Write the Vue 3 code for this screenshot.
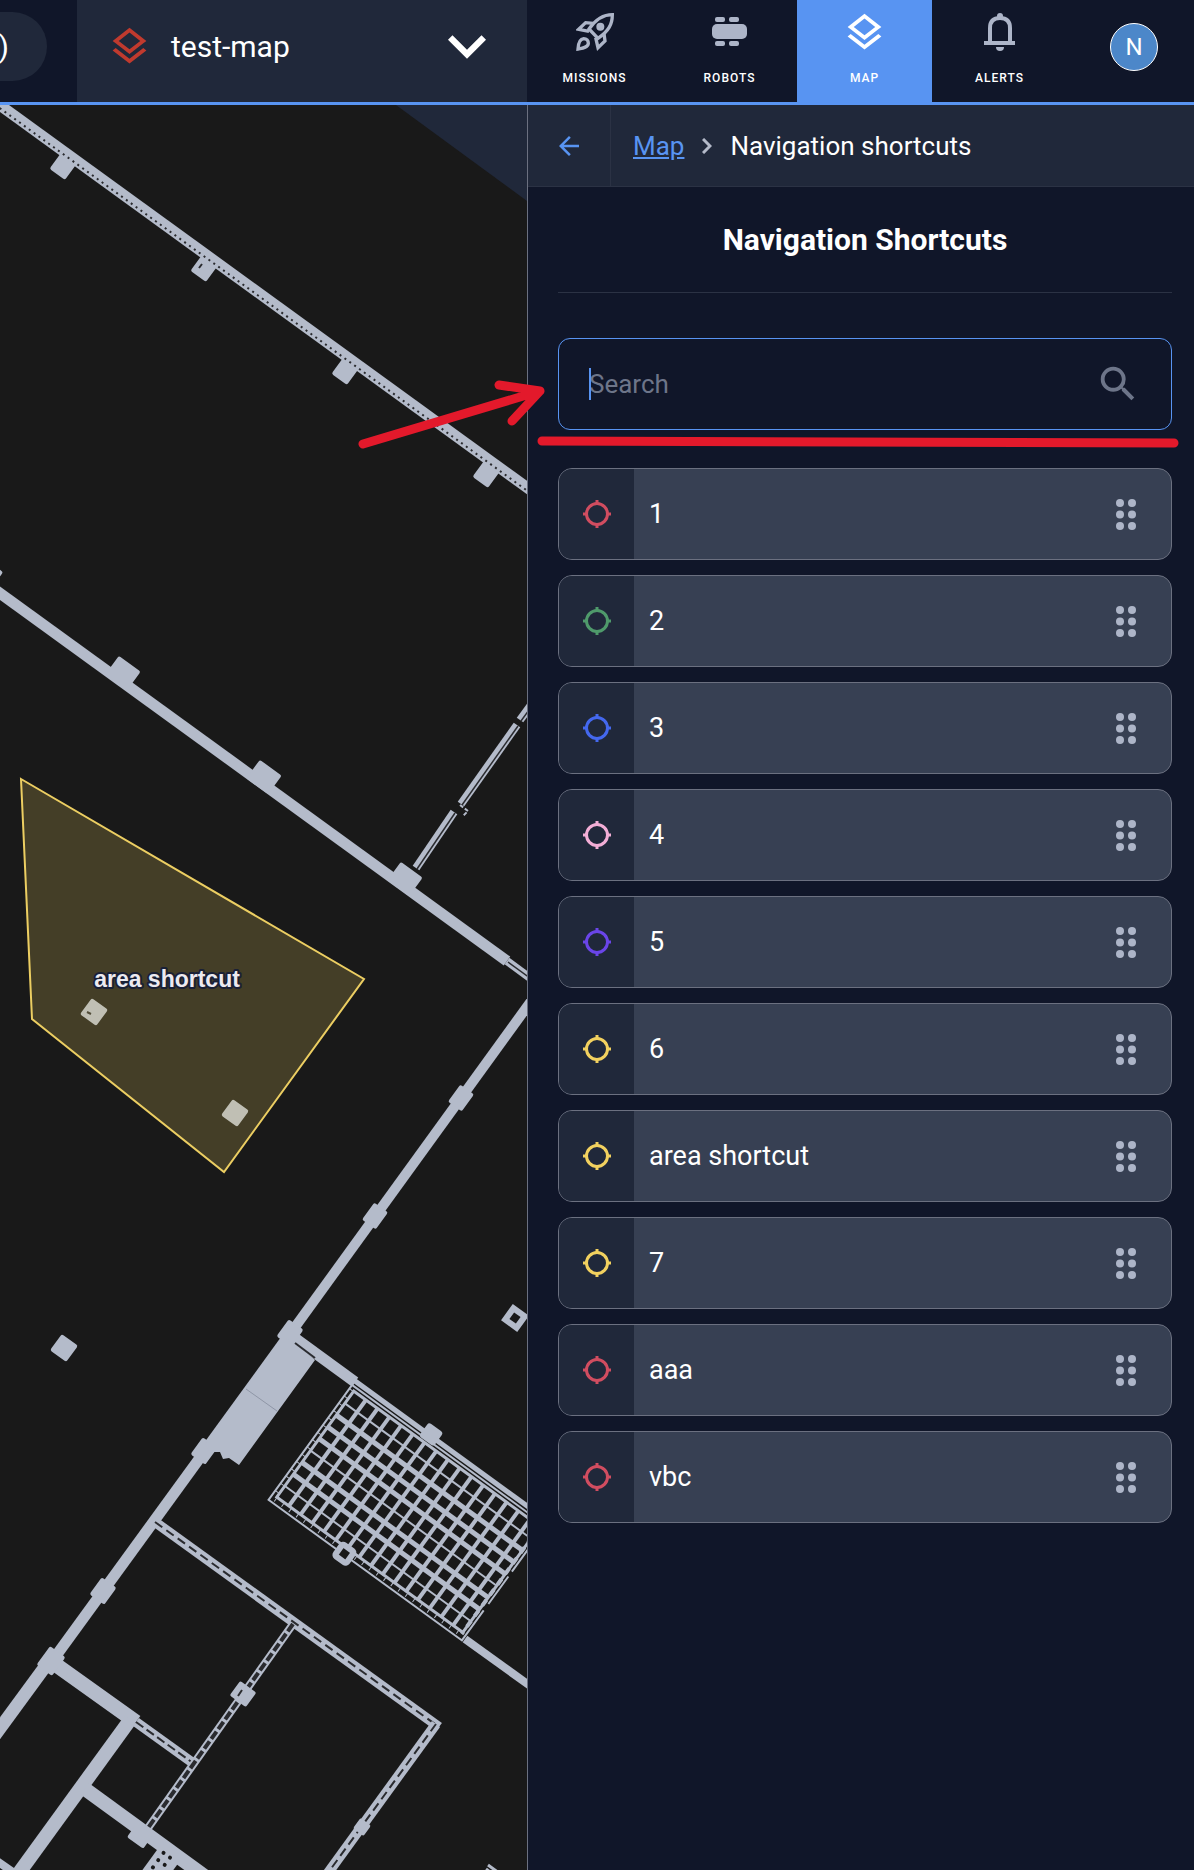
<script setup>
import { ref } from 'vue'

const search = ref('')

const tabs = [
  { key: 'missions', label: 'Missions' },
  { key: 'robots', label: 'Robots' },
  { key: 'map', label: 'Map' },
  { key: 'alerts', label: 'Alerts' },
]
const activeTab = ref('map')

const shortcuts = [
  { name: '1', color: '#d14d60' },
  { name: '2', color: '#4f9a6b' },
  { name: '3', color: '#4468ee' },
  { name: '4', color: '#f3aed6' },
  { name: '5', color: '#6a45e8' },
  { name: '6', color: '#f2d15f' },
  { name: 'area shortcut', color: '#f2d15f' },
  { name: '7', color: '#f2d15f' },
  { name: 'aaa', color: '#d14d60' },
  { name: 'vbc', color: '#d14d60' },
]

// floor plan: solid walls [x1, y1, x2, y2, width]
const walls = [
  [-10, 98, 540, 497, 11],
  [-10, 586, 507, 961, 11],
  [537, 993, 290, 1334, 10],
  [290, 1334, 50, 1664, 11],
  [50, 1660, -10, 1742, 13],
  [52, 1662, 136, 1722, 15],
  [130, 1720, 16, 1877, 14],
  [85, 1789, 210, 1880, 14],
  [292, 1336, 355, 1382, 11],
  [465, 1639, 540, 1693, 8],
  [-6, 1859, 20, 1877, 8],
]

// double walls with a dark dashed core [x1, y1, x2, y2, width, core, dash]
const doubles = [
  [155, 1522, 439, 1727, 10, 2, '9 5'],
  [436, 1724, 325, 1877, 10, 2, '9 5'],
  [136, 1722, 193, 1763, 10, 2, '9 4'],
  [293, 1624, 148, 1828, 8, 4, '9 3'],
]

// thin glazed partitions
const glazing = [
  [416, 868, 454, 812],
  [461, 804, 517, 725],
  [520, 720, 534, 701],
  [507, 961, 537, 983],
]

// columns [cx, cy, w, h]
const columns = [
  [64, 165, 19, 23],
  [205, 267, 19, 23],
  [346, 370, 19, 23],
  [487, 473, 19, 23],
  [123, 673, 27, 23],
  [264, 777, 27, 23],
  [405, 879, 27, 23],
  [-3, 572, 10, 7],
  [461, 1098, 17, 21],
  [375, 1216, 17, 21],
  [290, 1333, 18, 21],
  [204, 1451, 18, 21],
  [103, 1591, 18, 21],
  [51, 1661, 19, 23],
  [64, 1348, 20, 20],
  [94, 1012, 20, 20],
  [235, 1113, 20, 20],
  [243, 1694, 20, 18],
  [140, 1836, 20, 17],
  [362, 1827, 13, 13],
]

const range = (n) => Array.from({ length: n }, (_, i) => i)
</script>

<template>
  <div class="app">
    <header class="topbar">
      <div class="topbar-left">
        <div class="status-pill">)</div>
        <button class="map-select" type="button">
          <svg class="icon-layers red" viewBox="0 0 24 24" aria-hidden="true">
            <path d="M11.99 18.54l-7.37-5.73L3 14.07l9 7 9-7-1.63-1.27zM12 16l7.36-5.73L21 9l-9-7-9 7 1.63 1.27L12 16zm0-11.47L17.74 9 12 13.47 6.26 9 12 4.53z" />
          </svg>
          <span class="map-name">test-map</span>
          <svg class="icon-expand" viewBox="6 8.59 12 7.41" aria-hidden="true">
            <path d="M16.59 8.59L12 13.17 7.41 8.59 6 10l6 6 6-6z" />
          </svg>
        </button>
      </div>
      <div class="topbar-right">
        <nav class="tabs">
          <button
            v-for="t in tabs"
            :key="t.key"
            type="button"
            class="tab"
            :class="{ active: activeTab === t.key }"
            @click="activeTab = t.key"
          >
            <span class="tab-icon">
              <svg v-if="t.key === 'missions'" width="38" height="38" viewBox="0 0 114 114" fill="none" stroke="currentColor" stroke-width="10" aria-hidden="true">
                <path d="M109 5C109 34 98 54 66 76L39 48C60 18 80 5 109 5Z" />
                <path d="M52 31L29 29 8 49 39 55" />
                <path d="M84 62L87 84 66 104 59 74" />
                <path d="M6 108C7 92 10 78 23 77 32 77 37 83 37 91 36 103 22 105 6 108Z" />
                <circle cx="73" cy="41" r="12" fill="currentColor" stroke="none" />
              </svg>
              <svg v-else-if="t.key === 'robots'" width="35" height="38" viewBox="0 0 35 38" fill="currentColor" aria-hidden="true">
                <rect x="3" y="4" width="10" height="5" rx="2" />
                <rect x="17" y="4" width="10" height="5" rx="2" />
                <rect x="0" y="11" width="35" height="15" rx="5" />
                <rect x="3" y="28" width="10" height="5" rx="2" />
                <rect x="17" y="28" width="10" height="5" rx="2" />
              </svg>
              <svg v-else-if="t.key === 'map'" class="icon-layers" viewBox="0 0 24 24" aria-hidden="true">
                <path d="M11.99 18.54l-7.37-5.73L3 14.07l9 7 9-7-1.63-1.27zM12 16l7.36-5.73L21 9l-9-7-9 7 1.63 1.27L12 16zm0-11.47L17.74 9 12 13.47 6.26 9 12 4.53z" />
              </svg>
              <svg v-else width="32" height="38" viewBox="0 0 32 38" fill="currentColor" aria-hidden="true">
                <circle cx="16" cy="3" r="3" />
                <path d="M6 29V15C6 8 10 5 16 5S26 8 26 15V29" fill="none" stroke="currentColor" stroke-width="4" />
                <rect x="0" y="28" width="31" height="4" />
                <path d="M12 34H20A4 4 0 0 1 12 34Z" />
              </svg>
            </span>
            <span class="tab-label">{{ t.label }}</span>
          </button>
        </nav>
        <button class="avatar" type="button">N</button>
      </div>
    </header>

    <main class="content">
      <section class="map">
        <svg class="plan" viewBox="0 105 527 1765" preserveAspectRatio="xMinYMin slice">
          <path class="outside" d="M396 105L527 201V105Z" />

          <g class="wall">
            <line v-for="(w, i) in walls" :key="i" :x1="w[0]" :y1="w[1]" :x2="w[2]" :y2="w[3]" :stroke-width="w[4]" />
          </g>

          <g v-for="(d, i) in doubles" :key="'d' + i">
            <line class="wall" :x1="d[0]" :y1="d[1]" :x2="d[2]" :y2="d[3]" :stroke-width="d[4]" />
            <line class="core" :x1="d[0]" :y1="d[1]" :x2="d[2]" :y2="d[3]" :stroke-width="d[5]" :stroke-dasharray="d[6]" />
          </g>

          <g v-for="(g, i) in glazing" :key="'g' + i">
            <line class="wall" :x1="g[0]" :y1="g[1]" :x2="g[2]" :y2="g[3]" stroke-width="8" />
            <line class="core" :x1="g[0] + 1" :y1="g[1] + 1" :x2="g[2] + 1" :y2="g[3] + 1" stroke-width="1.5" />
          </g>
          <path class="wall" d="M460 805L468 811 463 816" fill="none" stroke-width="2" stroke-dasharray="4 2" />

          <rect
            v-for="(c, i) in columns"
            :key="'c' + i"
            class="column"
            :x="c[0] - c[2] / 2"
            :y="c[1] - c[3] / 2"
            :width="c[2]"
            :height="c[3]"
            rx="2"
            :transform="`rotate(36 ${c[0]} ${c[1]})`"
          />
          <line class="core" x1="-10" y1="101" x2="540" y2="500" stroke-width="2" stroke-dasharray="2 4" />
          <path class="core" d="M199 268L202 264M87 1012L91 1014M238 1696L242 1690" stroke-width="2" />

          <!-- hollow column -->
          <rect class="wall" x="508" y="1311" width="14" height="14" transform="rotate(36 515 1318)" fill="#191919" stroke-width="6" />

          <!-- solid block next to the stairs -->
          <path class="column" d="M282 1337L296 1343 315 1360 239 1465 229 1458 223 1459 220 1452 209 1452 205 1444Z" />
          <path class="core" d="M295 1343L315 1358" stroke-width="2" />
          <path d="M246 1389L277 1411" stroke="#8f96a6" stroke-width="1" />

          <!-- grating -->
          <g transform="translate(353 1382) rotate(36)">
            <path class="wall" d="M0 -2H240" stroke-width="5" />
            <path class="wall" d="M0 3H240M1 0V146M0 145H241M240 0V60M240 66V100M240 108V146" fill="none" stroke-width="2" />
            <path class="wall" d="M6 7H236V138H6Z" fill="none" stroke-width="3" />
            <path class="wall" d="M3 7V140M6 141H236" fill="none" stroke-width="4" stroke-dasharray="1 8" />
            <path class="wall" d="M236 7V140" fill="none" stroke-width="4" stroke-dasharray="7 6" />
            <g class="wall">
              <line v-for="n in range(15)" :key="'u' + n" :x1="21 + n * 14.5" y1="7" :x2="21 + n * 14.5" y2="139" stroke-width="4" />
              <line v-for="n in range(8)" :key="'v' + n" x1="6" :y1="22 + n * 14.6" x2="236" :y2="22 + n * 14.6" :stroke-width="n === 0 || n === 4 || n === 7 ? 2 : 5" />
            </g>
            <rect class="column" x="85" y="-12" width="18" height="17" rx="3" />
            <rect class="wall" x="87" y="137" width="14" height="14" rx="2" fill="#191919" stroke-width="6" />
          </g>

          <!-- perforated duct -->
          <g transform="translate(168 1845) rotate(36)">
            <rect class="column" x="-6" y="0" width="25" height="40" />
            <g fill="#191919">
              <circle v-for="n in range(8)" :key="n" :cx="1 + (n % 2) * 8" :cy="9 + Math.floor(n / 2) * 9" r="2" />
            </g>
          </g>
          <path class="wall" d="M488 1865L510 1881M486 1869L498 1878" fill="none" stroke-width="3" />

          <polygon class="area" points="21,779 364,979 224,1172 32,1019" />
          <text class="area-label" x="167" y="987" text-anchor="middle">area shortcut</text>
        </svg>
      </section>

      <aside class="panel">
        <div class="crumbs">
          <button class="back" type="button" aria-label="Back">
            <svg width="30" height="30" viewBox="0 0 24 24" fill="currentColor" aria-hidden="true">
              <path d="M20 11H7.83l5.59-5.59L12 4l-8 8 8 8 1.41-1.41L7.83 13H20v-2z" />
            </svg>
          </button>
          <div class="trail">
            <a href="#map">Map</a>
            <svg width="10" height="16" viewBox="0 0 10 16" fill="none" stroke="#b4bac9" stroke-width="3" aria-hidden="true">
              <path d="M1 1L8 8 1 15" />
            </svg>
            <span>Navigation shortcuts</span>
          </div>
        </div>

        <div class="panel-body">
          <h1>Navigation Shortcuts</h1>

          <label class="search">
            <input v-model="search" type="text" placeholder="Search" aria-label="Search" />
            <span class="caret"></span>
            <svg width="46" height="46" viewBox="0 0 24 24" fill="currentColor" aria-hidden="true">
              <path d="M15.5 14h-.79l-.28-.27A6.471 6.471 0 0 0 16 9.5 6.5 6.5 0 1 0 9.5 16c1.61 0 3.09-.59 4.23-1.57l.27.28v.79l5 4.99L20.49 19l-4.99-5zm-6 0C7.01 14 5 11.99 5 9.5S7.01 5 9.5 5 14 7.01 14 9.5 11.99 14 9.5 14z" />
            </svg>
          </label>

          <ul class="shortcuts">
            <li v-for="s in shortcuts" :key="s.name" class="shortcut">
              <span class="shortcut-icon" :style="{ color: s.color }">
                <svg width="28" height="28" viewBox="0 0 28 28" fill="none" stroke="currentColor" stroke-width="3" aria-hidden="true">
                  <circle cx="14" cy="14" r="10.5" />
                  <path d="M14 0V4M14 24V28M0 14H4M24 14H28" />
                </svg>
              </span>
              <span class="shortcut-name">{{ s.name }}</span>
              <button class="drag" type="button" aria-label="Reorder">
                <svg width="20" height="31" viewBox="0 0 20 31" fill="currentColor" aria-hidden="true">
                  <circle cx="4" cy="4" r="4" />
                  <circle cx="16" cy="4" r="4" />
                  <circle cx="4" cy="15.5" r="4" />
                  <circle cx="16" cy="15.5" r="4" />
                  <circle cx="4" cy="27" r="4" />
                  <circle cx="16" cy="27" r="4" />
                </svg>
              </button>
            </li>
          </ul>
        </div>
      </aside>
    </main>

    <svg class="marker" viewBox="0 0 1194 1870" preserveAspectRatio="xMinYMin meet" aria-hidden="true">
      <path d="M363 444L540 391M499 385L540 391 512 421M542 441L1174 443" />
    </svg>
  </div>
</template>

<style>
body {
  margin: 0;
  background: #101629;
}
</style>

<style scoped>
.app {
  position: relative;
  display: flex;
  flex-direction: column;
  min-height: 100vh;
  background: #101629;
  color: #fff;
  font-family: Roboto, sans-serif;
  font-size: 26px;
}
.app *,
.app {
  box-sizing: border-box;
}
button {
  padding: 0;
  border: 0;
  background: none;
  color: inherit;
  font: inherit;
  cursor: pointer;
}
svg {
  display: block;
  flex: none;
}

/* top bar */
.topbar,
.content {
  display: grid;
  grid-template-columns: minmax(0, 527fr) minmax(0, 667fr);
}
.topbar {
  height: 105px;
  border-bottom: 3px solid #5894f2;
}
.topbar-left {
  display: flex;
  align-items: center;
  gap: 30px;
}
.status-pill {
  display: flex;
  align-items: center;
  justify-content: flex-end;
  width: 47px;
  height: 69px;
  margin-bottom: 9px;
  padding-right: 38px;
  border-radius: 0 35px 35px 0;
  background: #20283a;
  font-size: 30px;
}
.map-select {
  display: flex;
  flex: 1;
  align-items: center;
  align-self: stretch;
  padding: 0 41px 9px 30px;
  background: #20283a;
  font-size: 30px;
  text-align: left;
}
.map-name {
  flex: 1;
  padding-left: 19px;
}
.icon-layers {
  width: 45px;
  height: 45px;
  fill: currentColor;
}
.icon-layers.red {
  fill: #c03a2e;
}
.icon-expand {
  width: 38px;
  height: 24px;
  fill: currentColor;
}
.topbar-right {
  display: flex;
  align-items: center;
  justify-content: space-between;
  padding-right: 36px;
}
.tabs {
  display: flex;
  align-self: stretch;
}
.tab {
  display: flex;
  flex-direction: column;
  align-items: center;
  width: 135px;
  padding-top: 8px;
}
.tab.active {
  background: #5894f2;
}
.tab-icon {
  display: flex;
  align-items: center;
  justify-content: center;
  height: 48px;
  color: #adb5c8;
}
.tab.active .tab-icon {
  color: #fff;
}
.tab-label {
  margin-top: 13px;
  font-size: 12px;
  font-weight: 500;
  line-height: 18px;
  letter-spacing: 1px;
  text-transform: uppercase;
}
.avatar {
  width: 48px;
  height: 48px;
  margin-bottom: 9px;
  border: 1px solid #fff;
  border-radius: 50%;
  background: #4c87c9;
  font-size: 24px;
}

/* map */
.content {
  flex: 1;
}
.map {
  display: flex;
  background: #191919;
}
.plan {
  flex: 1;
  width: 100%;
  overflow: hidden;
}
.outside {
  fill: #20283a;
}
.wall {
  stroke: #b4bbca;
}
.column {
  fill: #b4bbca;
}
.core {
  stroke: #2a2b2f;
}
.area {
  fill: rgba(242, 209, 95, 0.2);
  stroke: #ecce62;
  stroke-width: 2;
}
.area-label {
  fill: #eceaf0;
  stroke: #1a2036;
  stroke-width: 4px;
  stroke-linejoin: round;
  paint-order: stroke;
  font: bold 23px "Liberation Sans", Arial, sans-serif;
}

/* side panel */
.panel {
  border-left: 1px solid #6b7080;
}
.crumbs {
  display: flex;
  height: 82px;
  border-bottom: 1px solid #2b3244;
  background: #20283a;
}
.back {
  display: flex;
  align-items: center;
  justify-content: center;
  width: 83px;
  border-right: 1px solid #2b3244;
  color: #5894f2;
}
.trail {
  display: flex;
  align-items: center;
  gap: 18px;
  padding-left: 22px;
}
.trail a {
  color: #5894f2;
}
.panel-body {
  padding: 0 22px 30px 30px;
}
h1 {
  margin: 0 0 45px;
  padding: 33px 0;
  border-bottom: 1px solid #2b3244;
  font-size: 30px;
  font-weight: 700;
  line-height: 39px;
  text-align: center;
}
.search {
  position: relative;
  display: flex;
  align-items: center;
  height: 92px;
  padding: 0 30px;
  border: 1px solid #5894f2;
  border-radius: 12px;
  color: #6d7589;
}
.search input {
  flex: 1;
  min-width: 0;
  padding: 0;
  border: 0;
  outline: 0;
  background: none;
  color: #fff;
  font: inherit;
}
.search input::placeholder {
  color: #6d7589;
  opacity: 1;
}
.caret {
  position: absolute;
  left: 30px;
  width: 2px;
  height: 32px;
  background: #5894f2;
}
.shortcuts {
  display: flex;
  flex-direction: column;
  gap: 15px;
  margin: 38px 0 0;
  padding: 0;
  list-style: none;
}
.shortcut {
  display: flex;
  align-items: center;
  height: 92px;
  overflow: hidden;
  border: 1px solid #6b7080;
  border-radius: 14px;
  background: #374053;
}
.shortcut-icon {
  display: flex;
  align-items: center;
  align-self: stretch;
  justify-content: center;
  width: 75px;
  background: #20283a;
}
.shortcut-name {
  flex: 1;
  padding-left: 15px;
  font-size: 27px;
}
.drag {
  margin-right: 35px;
  color: #adb5c8;
}

.marker {
  position: absolute;
  top: 0;
  left: 0;
  width: 100%;
  pointer-events: none;
}
.marker path {
  fill: none;
  stroke: #e3192b;
  stroke-width: 9;
  stroke-linecap: round;
  stroke-linejoin: round;
}
</style>
